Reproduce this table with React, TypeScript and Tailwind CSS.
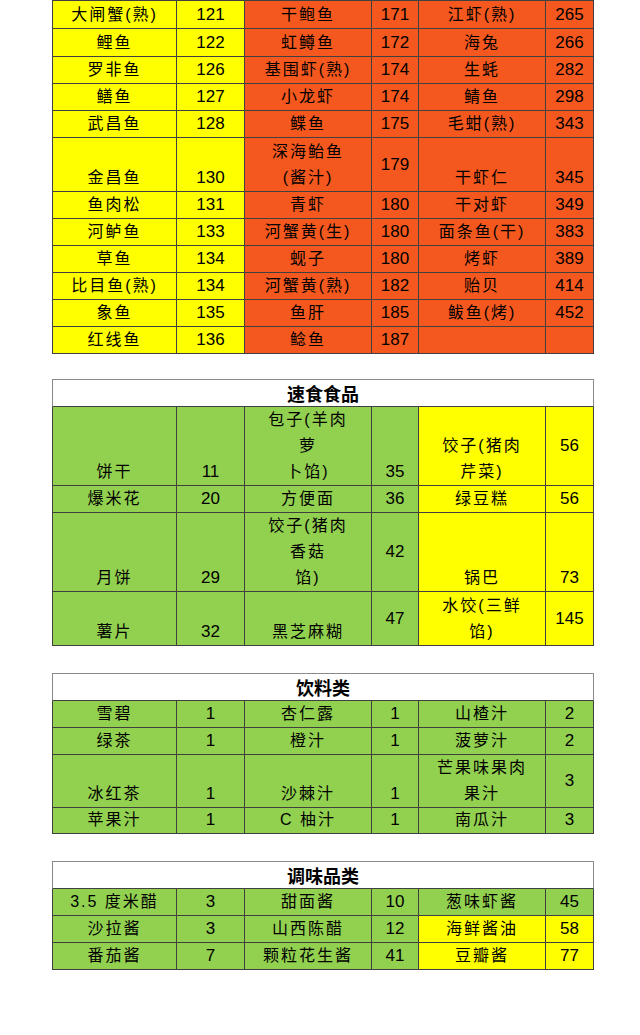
import React from 'react'

type Cell = { t: string; bg: string; mid?: boolean }
type Row = { h: string; cells: Cell[] }

const Y = 'bg-[#ffff00]'
const O = 'bg-[#f5581e]'
const G = 'bg-[#92d050]'

const hasCjk = (s: string) => /[\u4e00-\u9fff]/.test(s)

// build a row from six strings; mid marks the cells that sit in the middle
function row(h: string, bgs: string[], texts: string[], mid: number[] = []): Row {
    return {
        h,
        cells: texts.map((t, i) => ({ t, bg: bgs[i], mid: mid.includes(i) })),
    }
}

const seafood = [Y, Y, O, O, O, O]
const snackBg = [G, G, G, G, Y, Y]
const allGreen = [G, G, G, G, G, G]

const seafoodRows: Row[] = [
    row('h-[28px]', seafood, ['大闸蟹(熟)', '121', '干鲍鱼', '171', '江虾(熟)', '265']),
    row('h-[28px]', seafood, ['鲤鱼', '122', '虹鳟鱼', '172', '海兔', '266']),
    row('h-[27px]', seafood, ['罗非鱼', '126', '基围虾(熟)', '174', '生蚝', '282']),
    row('h-[27px]', seafood, ['鳝鱼', '127', '小龙虾', '174', '鲭鱼', '298']),
    row('h-[27px]', seafood, ['武昌鱼', '128', '鲽鱼', '175', '毛蚶(熟)', '343']),
    row('h-[54px]', seafood, ['金昌鱼', '130', '深海鲐鱼\n(酱汁)', '179', '干虾仁', '345'], [3]),
    row('h-[27px]', seafood, ['鱼肉松', '131', '青虾', '180', '干对虾', '349']),
    row('h-[27px]', seafood, ['河鲈鱼', '133', '河蟹黄(生)', '180', '面条鱼(干)', '383']),
    row('h-[27px]', seafood, ['草鱼', '134', '蚬子', '180', '烤虾', '389']),
    row('h-[27px]', seafood, ['比目鱼(熟)', '134', '河蟹黄(熟)', '182', '贻贝', '414']),
    row('h-[27px]', seafood, ['象鱼', '135', '鱼肝', '185', '鲅鱼(烤)', '452']),
    row('h-[27px]', seafood, ['红线鱼', '136', '鲶鱼', '187', '', '']),
]

const snackRows: Row[] = [
    row('h-[79px]', snackBg, ['饼干', '11', '包子(羊肉\n萝\n卜馅)', '35', '饺子(猪肉\n芹菜)', '56'], [5]),
    row('h-[27px]', snackBg, ['爆米花', '20', '方便面', '36', '绿豆糕', '56']),
    row('h-[79px]', snackBg, ['月饼', '29', '饺子(猪肉\n香菇\n馅)', '42', '锅巴', '73'], [3]),
    row('h-[54px]', snackBg, ['薯片', '32', '黑芝麻糊', '47', '水饺(三鲜\n馅)', '145'], [3, 5]),
]

const drinkRows: Row[] = [
    row('h-[27px]', allGreen, ['雪碧', '1', '杏仁露', '1', '山楂汁', '2']),
    row('h-[27px]', allGreen, ['绿茶', '1', '橙汁', '1', '菠萝汁', '2']),
    row('h-[53px]', allGreen, ['冰红茶', '1', '沙棘汁', '1', '芒果味果肉\n果汁', '3'], [5]),
    row('h-[26px]', allGreen, ['苹果汁', '1', 'C 柚汁', '1', '南瓜汁', '3']),
]

const sauceRows: Row[] = [
    row('h-[27px]', allGreen, ['3.5 度米醋', '3', '甜面酱', '10', '葱味虾酱', '45']),
    row('h-[27px]', snackBg, ['沙拉酱', '3', '山西陈醋', '12', '海鲜酱油', '58']),
    row('h-[27px]', snackBg, ['番茄酱', '7', '颗粒花生酱', '41', '豆瓣酱', '77']),
]

function TableCell({ cell, h }: { cell: Cell; h: string }) {
    return (
        <div
            className={`${h} ${cell.bg} flex flex-col ${cell.mid ? 'justify-center' : 'justify-end'} items-center border-r border-b border-[#404040] text-center whitespace-pre-line leading-[26px] text-black ${
                hasCjk(cell.t) ? 'text-[16px] tracking-[2px]' : 'text-[17px]'
            }`}
        >
            {cell.t}
        </div>
    )
}

function Sheet({ title, rows }: { title?: string; rows: Row[] }) {
    return (
        <div className="w-[542px]">
            {title && (
                <div className="flex h-[28px] items-center justify-center border border-[#8a8a8a] border-b-[#404040] bg-white text-[18px] font-bold text-black font-['Noto_Sans_CJK_SC',sans-serif]">
                    {title}
                </div>
            )}
            <div
                className={`grid grid-cols-[124px_68px_127px_47px_127px_48px] border-l border-[#404040] ${
                    title ? '' : 'border-t'
                }`}
            >
                {rows.map((r, ri) =>
                    r.cells.map((c, ci) => <TableCell key={`${ri}-${ci}`} cell={c} h={r.h} />),
                )}
            </div>
        </div>
    )
}

export default function App() {
    return (
        <div className="min-h-[1035px] w-[640px] bg-white pl-[52px] font-['Liberation_Sans','Noto_Sans_CJK_SC',sans-serif]">
            <Sheet rows={seafoodRows} />
            <div className="mt-[25px]">
                <Sheet title="速食食品" rows={snackRows} />
            </div>
            <div className="mt-[27px]">
                <Sheet title="饮料类" rows={drinkRows} />
            </div>
            <div className="mt-[27px]">
                <Sheet title="调味品类" rows={sauceRows} />
            </div>
        </div>
    )
}
